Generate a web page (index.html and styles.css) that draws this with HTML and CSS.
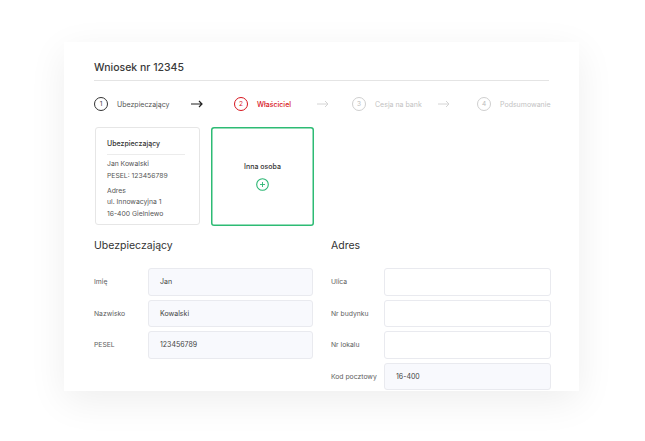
FILE: index.html
```html
<!DOCTYPE html>
<html lang="pl">
<head>
<meta charset="utf-8">
<title>Wniosek nr 12345</title>
<link rel="stylesheet" href="styles.css">
</head>
<body>
<div class="panel">
  <div class="title">Wniosek nr 12345</div>

  <div class="stepper">
    <div class="step done"><span class="num">1</span><span class="label">Ubezpieczający</span></div>
    <div class="arrow dark"><svg width="12" height="8" viewBox="0 0 12 8"><path d="M0 4H11M8 1L11 4L8 7" fill="none" stroke="#222" stroke-width="1.2"/></svg></div>
    <div class="step active"><span class="num">2</span><span class="label">Właściciel</span></div>
    <div class="arrow"><svg width="12" height="8" viewBox="0 0 12 8"><path d="M0 4H11M8 1L11 4L8 7" fill="none" stroke="#d4d4d4" stroke-width="1"/></svg></div>
    <div class="step todo"><span class="num">3</span><span class="label">Cesja na bank</span></div>
    <div class="arrow"><svg width="12" height="8" viewBox="0 0 12 8"><path d="M0 4H11M8 1L11 4L8 7" fill="none" stroke="#d4d4d4" stroke-width="1"/></svg></div>
    <div class="step todo"><span class="num">4</span><span class="label">Podsumowanie</span></div>
  </div>

  <div class="cards">
    <div class="card person">
      <div class="card-title">Ubezpieczający</div>
      <p>Jan Kowalski<br>PESEL: 123456789</p>
      <p>Adres<br>ul. Innowacyjna 1<br>16-400 Gielniewo</p>
    </div>
    <div class="card add">
      <div class="add-label">Inna osoba</div>
      <span class="plus"><svg width="13" height="13" viewBox="0 0 13 13"><circle cx="6.5" cy="6.5" r="5.8" fill="none" stroke="#2bb673" stroke-width="1.1"/><path d="M6.5 4V9M4 6.5H9" stroke="#2bb673" stroke-width="0.9"/></svg></span>
    </div>
  </div>

  <div class="forms">
    <div class="form left">
      <h2>Ubezpieczający</h2>
      <div class="row"><span class="lbl">Imię</span><div class="field filled">Jan</div></div>
      <div class="row"><span class="lbl">Nazwisko</span><div class="field filled">Kowalski</div></div>
      <div class="row"><span class="lbl">PESEL</span><div class="field filled">123456789</div></div>
    </div>
    <div class="form right">
      <h2>Adres</h2>
      <div class="row"><span class="lbl">Ulica</span><div class="field"></div></div>
      <div class="row"><span class="lbl">Nr budynku</span><div class="field"></div></div>
      <div class="row"><span class="lbl">Nr lokalu</span><div class="field"></div></div>
      <div class="row"><span class="lbl">Kod pocztowy</span><div class="field filled">16-400</div></div>
    </div>
  </div>
</div>
</body>
</html>
```

FILE: styles.css
```css
html, body {
  margin: 0;
  padding: 0;
  background: #ffffff;
}

body {
  width: 645px;
  height: 441px;
  overflow: hidden;
  font-family: Inter, "Noto Sans", "Liberation Sans", sans-serif;
  color: #333;
}

.panel {
  box-sizing: border-box;
  margin: 42px 0 0 64px;
  width: 515px;
  height: 349px;
  background: #fff;
  box-shadow: 0 10px 36px rgba(0, 0, 0, 0.07);
  padding: 19px 28px 0 30px;
  overflow: hidden;
}

.title {
  font-size: 10.5px;
  line-height: 14px;
  font-weight: 500;
  color: #3a3a3a;
  padding-bottom: 5px;
  border-bottom: 1px solid #e4e4e4;
  margin-right: 2px;
}

.stepper {
  display: grid;
  grid-template-columns: 97px 43px 83px 35px 86px 39px auto;
  align-items: center;
  margin-top: 16px;
  height: 14px;
}

.step {
  display: flex;
  align-items: center;
  gap: 9px;
  white-space: nowrap;
}

.num {
  box-sizing: border-box;
  width: 14px;
  height: 14px;
  border-radius: 50%;
  border: 1px solid #333;
  display: flex;
  align-items: center;
  justify-content: center;
  font-size: 6.5px;
  line-height: 1;
}

.label {
  font-size: 7px;
}

.step.done .num { border-color: #333; color: #444; }
.step.done .label { color: #555; }
.step.active .num { border-color: #d7141d; color: #d7141d; border-width: 1.2px; }
.step.active .label { color: #d7141d; font-weight: 500; }
.step.todo .num { border-color: #cfcfcf; color: #bbb; }
.step.todo .label { color: #c2c2c2; }

.arrow {
  display: flex;
  align-items: center;
}

.arrow svg { display: block; }

.cards {
  display: flex;
  align-items: flex-start;
  gap: 11px;
  margin-top: 16px;
  margin-left: 1px;
}

.card {
  box-sizing: border-box;
  border-radius: 3px;
  background: #fff;
}

.person {
  width: 105px;
  height: 98px;
  border: 1px solid #e6e6e6;
  padding: 10px 11px 0 11px;
  font-size: 6.8px;
  line-height: 11.8px;
  color: #555;
}

.card-title {
  font-size: 7px;
  font-weight: 500;
  color: #333;
  line-height: 12px;
  padding-bottom: 4px;
  border-bottom: 1px solid #ececec;
  margin-right: 3px;
}

.person p {
  margin: 3px 0 0 0;
}

.add {
  width: 103px;
  height: 99px;
  border: 0;
  box-shadow: inset 0 0 0 1.5px #2dbb74;
  display: flex;
  flex-direction: column;
  align-items: center;
  padding-top: 34px;
}

.add-label {
  font-size: 7px;
  line-height: 12px;
  color: #333;
  font-weight: 500;
}

.plus {
  margin-top: 5px;
  display: block;
  height: 13px;
}

.plus svg { display: block; }

.forms {
  display: grid;
  grid-template-columns: 219px 220px;
  column-gap: 18px;
  margin-top: 13px;
}

.form h2 {
  margin: 0 0 15px 0;
  font-size: 10.5px;
  line-height: 14px;
  font-weight: 400;
  color: #333;
}

.row {
  display: flex;
  align-items: center;
  margin-bottom: 4px;
}

.lbl {
  font-size: 6.8px;
  color: #606060;
  white-space: nowrap;
}

.left .lbl { width: 54px; }
.right .lbl { width: 53px; }

.field {
  box-sizing: border-box;
  flex: 1;
  height: 27.5px;
  border: 1px solid #e9eaef;
  border-radius: 3px;
  background: #fff;
  font-size: 7px;
  color: #444;
  display: flex;
  align-items: center;
  padding-left: 11px;
}

.field.filled {
  background: #f8f9fd;
}
```
